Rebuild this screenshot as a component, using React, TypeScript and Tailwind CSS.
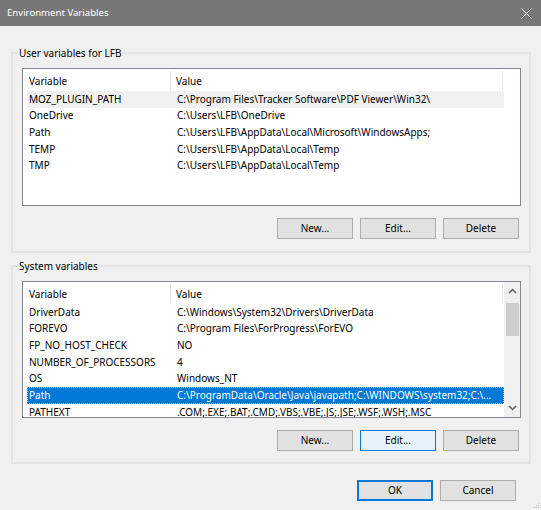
import React from "react";

const F = { fontFamily: '"Noto Sans", "Open Sans", sans-serif' };

type Row = { name: string; value: string; sel?: "inactive" | "active" };

const userRows: Row[] = [
  { name: "MOZ_PLUGIN_PATH", value: "C:\\Program Files\\Tracker Software\\PDF Viewer\\Win32\\", sel: "inactive" },
  { name: "OneDrive", value: "C:\\Users\\LFB\\OneDrive" },
  { name: "Path", value: "C:\\Users\\LFB\\AppData\\Local\\Microsoft\\WindowsApps;" },
  { name: "TEMP", value: "C:\\Users\\LFB\\AppData\\Local\\Temp" },
  { name: "TMP", value: "C:\\Users\\LFB\\AppData\\Local\\Temp" },
];

const sysRows: Row[] = [
  { name: "DriverData", value: "C:\\Windows\\System32\\Drivers\\DriverData" },
  { name: "FOREVO", value: "C:\\Program Files\\ForProgress\\ForEVO" },
  { name: "FP_NO_HOST_CHECK", value: "NO" },
  { name: "NUMBER_OF_PROCESSORS", value: "4" },
  { name: "OS", value: "Windows_NT" },
  { name: "Path", value: "C:\\ProgramData\\Oracle\\Java\\javapath;C:\\WINDOWS\\system32;C:\\...", sel: "active" },
  { name: "PATHEXT", value: ".COM;.EXE;.BAT;.CMD;.VBS;.VBE;.JS;.JSE;.WSF;.WSH;.MSC" },
];

function Header() {
  return (
    <div className="flex h-[22px] items-center bg-white pt-[2px]">
      <div className="w-[148px] h-full flex items-center pl-[6px] border-r border-[#e5e5e5]">Variable</div>
      <div className="w-[332px] h-full flex items-center pl-[5px] border-r border-[#e5e5e5]">Value</div>
    </div>
  );
}

function Rows({ rows }: { rows: Row[] }) {
  return (
    <div className="flex flex-col">
      {rows.map((r) => {
        const cls =
          r.sel === "active"
            ? "bg-[#0078d7] text-white border border-dotted border-[#9cc8ef]"
            : r.sel === "inactive"
            ? "bg-[#f0f0f0] border border-transparent"
            : "border border-transparent";
        return (
          <div key={r.name} className={`ml-[4px] w-[477px] h-[16.67px] flex items-center whitespace-nowrap overflow-hidden ${cls}`}>
            <div className="w-[144px] pl-[1px] shrink-0">{r.name}</div>
            <div className="pl-[5px]">{r.value}</div>
          </div>
        );
      })}
    </div>
  );
}

function Btn({ label, variant }: { label: string; variant?: "hover" | "default" }) {
  const cls =
    variant === "hover"
      ? "bg-[#e5f1fb] border border-[#0078d7]"
      : variant === "default"
      ? "bg-[#e1e1e1] border-2 border-[#0078d7]"
      : "bg-[#e1e1e1] border border-[#adadad]";
  return (
    <div className={`w-[76px] h-[21px] flex items-center justify-center text-black ${cls}`}>{label}</div>
  );
}

export default function App() {
  return (
    <div className="w-[541px] h-[510px] bg-[#f0f0f0] text-[10px] text-black flex flex-col relative overflow-hidden" style={F}>
      <div className="h-[26px] bg-[#777777] flex items-center justify-between pl-[7px] pr-[8px] text-white shrink-0">
        <span className="text-[9.6px]">Environment Variables</span>
        <svg width="11" height="11" viewBox="0 0 11 11" className="mr-[1px]">
          <path d="M0.5 0.5 L10.5 10.5 M10.5 0.5 L0.5 10.5" stroke="#f4f4f4" strokeWidth="1" />
        </svg>
      </div>

      <fieldset className="mt-[19px] ml-[11px] w-[520px] h-[208px] border-2 border-[#e3e3e3] p-0">
        <legend className="ml-[5px] px-[1px] h-[16px] leading-[16px]">User variables for LFB</legend>
        <div className="ml-[9px] mt-[7px] w-[499px] h-[138px] border border-[#828790] bg-white">
          <Header />
          <Rows rows={userRows} />
        </div>
        <div className="ml-[9px] mt-[12px] flex justify-end gap-[7px] pr-[10px]">
          <Btn label="New..." />
          <Btn label="Edit..." />
          <Btn label="Delete" />
        </div>
      </fieldset>

      <fieldset className="mt-[5px] ml-[11px] w-[520px] h-[206px] border-2 border-[#e3e3e3] p-0">
        <legend className="ml-[5px] px-[1px] h-[16px] leading-[16px]">System variables</legend>
        <div className="ml-[9px] mt-[7px] w-[499px] h-[137px] border border-[#828790] bg-white flex">
          <div className="flex-1 overflow-hidden">
            <Header />
            <Rows rows={sysRows} />
          </div>
          <div className="w-[16px] bg-[#f0f0f0] flex flex-col items-center">
            <div className="h-[18px] w-full flex items-center justify-center">
              <svg width="9" height="6" viewBox="0 0 9 6">
                <path d="M1 5 L4.5 1.5 L8 5" stroke="#606060" strokeWidth="1.5" fill="none" />
              </svg>
            </div>
            <div className="mt-[3px] w-[13px] h-[33px] bg-[#cdcdcd]" />
            <div className="flex-1" />
            <div className="h-[18px] w-full flex items-center justify-center">
              <svg width="9" height="6" viewBox="0 0 9 6">
                <path d="M1 1 L4.5 4.5 L8 1" stroke="#606060" strokeWidth="1.5" fill="none" />
              </svg>
            </div>
          </div>
        </div>
        <div className="ml-[9px] mt-[12px] flex justify-end gap-[7px] pr-[10px]">
          <Btn label="New..." />
          <Btn label="Edit..." variant="hover" />
          <Btn label="Delete" />
        </div>
      </fieldset>

      <div className="mt-[16px] flex justify-end gap-[7px] pr-[25px]">
        <Btn label="OK" variant="default" />
        <Btn label="Cancel" />
      </div>

      <svg width="6" height="6" viewBox="0 0 6 6" className="absolute right-[1px] bottom-[1px]">
        <rect x="4" y="0" width="1" height="1" fill="#bcbcbc" />
        <rect x="2" y="2" width="1" height="1" fill="#bcbcbc" />
        <rect x="4" y="2" width="1" height="1" fill="#bcbcbc" />
        <rect x="0" y="4" width="1" height="1" fill="#bcbcbc" />
        <rect x="2" y="4" width="1" height="1" fill="#bcbcbc" />
        <rect x="4" y="4" width="1" height="1" fill="#bcbcbc" />
      </svg>
    </div>
  );
}
